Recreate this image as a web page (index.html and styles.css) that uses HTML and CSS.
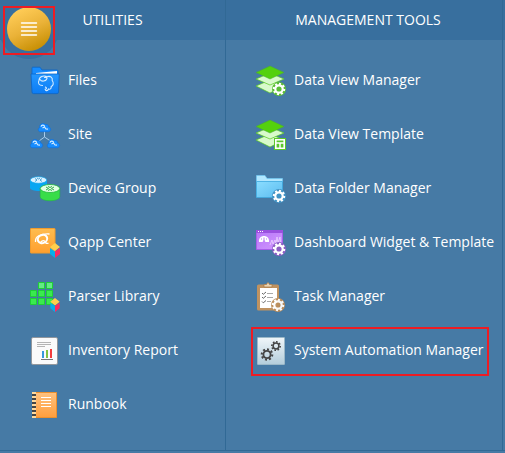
FILE: index.html
```html
<!DOCTYPE html>
<html lang="en">
<head>
<meta charset="utf-8">
<title>Menu</title>
<link rel="stylesheet" href="styles.css">
</head>
<body>
<svg class="defs" aria-hidden="true">
  <defs>
    <linearGradient id="blue" x2="0" y2="1"><stop stop-color="#2497ff"/><stop offset="1" stop-color="#0c7cf5"/></linearGradient>
    <linearGradient id="sky" x2="1" y2="1"><stop stop-color="#8bddff"/><stop offset="1" stop-color="#5bbcf0"/></linearGradient>
    <linearGradient id="amber" x2="0" y2="1"><stop stop-color="#ffbd4f"/><stop offset="1" stop-color="#ff9f2e"/></linearGradient>
    <linearGradient id="peach" x2="0" y2="1"><stop stop-color="#ffc27f"/><stop offset="1" stop-color="#ff9e3d"/></linearGradient>
    <linearGradient id="violet" x2="1" y2="1"><stop stop-color="#b673f8"/><stop offset="1" stop-color="#d29aff"/></linearGradient>
    <linearGradient id="steel" x2="0" y2="1"><stop stop-color="#f0f6f9"/><stop offset="1" stop-color="#b3cddb"/></linearGradient>
    <symbol id="gear" viewBox="-7 -7 14 14" overflow="visible">
      <circle class="gear-edge" r="5"/>
      <circle class="gear-teeth" r="5" pathLength="32"/>
      <circle class="gear-ring" r="3.7"/>
    </symbol>
    <symbol id="cube" viewBox="0 0 10 15">
      <path fill="#ffcf4d" d="M5 0l5 4-5 4-5-4z"/>
      <path fill="#08aeea" d="M0 5l5 3.500V15l-5-4z"/>
      <path fill="#fb2a62" d="M10 5L5 8.500V15l5-4z"/>
    </symbol>
    <symbol id="cloud" viewBox="0 0 13 9" overflow="visible">
      <path fill="#168cff" stroke="#0a6fe0" stroke-width=".6" d="M2 8.700C0 8.400-.2 5.200 1.800 4.500 1 1 5.500-.8 7.500 1.600c2.200-.6 3.200.9 3 2.400 2.800.3 2.800 4.400 0 4.700z"/>
      <path fill="none" stroke="#d4ebff" stroke-width="1.200" d="M3 3.600c.5-2 3-2 3.700-.2M4.500 5l2-1 1.500 2 2 .2"/>
    </symbol>
    <symbol id="layers" viewBox="0 0 30 30">
      <path fill="#d8facb" stroke="#58c81c" stroke-width=".7" d="M0 21l14-6 14 6-14 7z"/>
      <path fill="#d8facb" stroke="#58c81c" stroke-width=".7" d="M0 14l14-6 14 6-14 6z"/>
      <path fill="#54d10d" stroke="#4aaa32" stroke-width=".5" d="M0 7.500L14 1l14 6.500L14 14z"/>
    </symbol>
  </defs>
</svg>
<nav class="menu">
  <button class="menu-button" type="button" aria-label="Menu">
    <svg viewBox="0 0 18 16" width="18" height="16"><path stroke="#fff" stroke-width="1.400" stroke-linecap="round" d="M1.500 2h15M1.500 6h15M1.500 10h15M1.500 14h15"/></svg>
  </button>
  <section class="column utilities">
    <h2>UTILITIES</h2>
    <ul>
      <li><a href="#"><svg class="icon" viewBox="0 0 30 30">
        <path fill="#168cff" stroke="#0a64c8" stroke-width=".8" d="M2 11V3q0-.8.8-.8H10l2 2.800h15q1 0 1 1v6z"/>
        <path fill="#fff" d="M6 8l21-2v4H6z"/>
        <path fill="url(#blue)" stroke="#0a64c8" stroke-width=".8" d="M1 9h28.200l-.7 18q0 1.600-1.500 1.600H3.500Q2 28.600 2 27z"/>
        <path fill="none" stroke="#d9edff" stroke-width="1.100" stroke-linecap="round" d="M12.500 20.500C9 20.500 7.500 18 9 15.500c0-4 4.500-5.500 8-3.800 3.500-1.200 6 1 5.200 3.800 2 2.500 1 5-1 6 .2 2.500-1.200 3-2.700 2.500-.8 2-3 2.200-3.300.3 1.800-.3 1.500-1.500.2-2.300M10 14.500c1.500 2.500 6 2 7-1 .2-1-1.500-1.300-2.500-1"/>
      </svg>Files</a></li>
      <li><a href="#"><svg class="icon" viewBox="0 0 30 30">
        <path fill="none" stroke="#a9cdec" stroke-width="1" d="M14.500 12v6L9 22M14.500 18l6 4"/>
        <use href="#cloud" x="8" y="4" width="13" height="9"/><use href="#cloud" x="0" y="20" width="13" height="9"/><use href="#cloud" x="17" y="20" width="13" height="9"/>
      </svg>Site</a></li>
      <li><a href="#"><svg class="icon" viewBox="0 0 30 30">
        <path fill="#08a6f2" d="M0 7v8c1 4 16 4 17 0V7z"/>
        <ellipse cx="8.500" cy="7" rx="8.200" ry="3.300" fill="#daf1ff" stroke="#1aa9ed" stroke-width=".7"/>
        <path fill="none" stroke="#248fc9" stroke-width=".8" d="M5 5.500L7 7 5 8.500M12 5.500L10 7l2 1.500M7 5l1.500 1L10 5"/>
        <path fill="#38dd48" stroke="#21b838" stroke-width=".5" d="M10.200 15v9c1 5 18.600 5 19.600 0v-9z"/>
        <ellipse cx="20" cy="15.500" rx="9.700" ry="4" fill="#e1ffe3" stroke="#20b83a" stroke-width=".8"/>
        <path fill="none" stroke="#23a23b" stroke-width=".9" d="M16 14l2.500 1.500L16 17M24 14l-2.500 1.500L24 17M18 13.500l2 1 2-1M18 17.500l2-1 2 1"/>
      </svg>Device Group</a></li>
      <li><a href="#"><svg class="icon" viewBox="0 0 30 30">
        <rect x=".5" y="1.500" width="24.500" height="24.500" rx=".5" fill="url(#amber)" stroke="#ef9b2e"/>
        <ellipse cx="12.500" cy="12" rx="4.800" ry="4" fill="none" stroke="#fff" stroke-width="2" transform="rotate(-25 12.500 12)"/>
        <path fill="none" stroke="#fff" stroke-width="1.300" d="M5.500 15C5 9.500 10 6.500 19.500 7M10.500 15.500c2-2.500 4-2.500 5 0q1.200 1.500 3 .5"/>
        <use href="#cube" x="20" y="16" width="10" height="15"/>
      </svg>Qapp Center</a></li>
      <li><a href="#"><svg class="icon" viewBox="0 0 30 30">
        <g fill="#3aea4e" stroke="#1fcf36"><path fill="#62eb84" d="M8.500 1.500h6v6h-6zM16.500 1.500h6v6h-6z"/><path d="M.5 9.500h6v6h-6zM8.500 9.500h6v6h-6zM16.500 9.500h6v6h-6zM.5 17.500h6v6h-6zM8.500 17.500h6v6h-6zM16.500 17.500h6v6h-6z"/></g>
        <use href="#cube" x="20" y="17" width="10" height="14"/>
      </svg>Parser Library</a></li>
      <li><a href="#"><svg class="icon" viewBox="0 0 30 30">
        <rect x="1.500" y="2.500" width="26" height="27" rx="1.500" fill="#fafafa" stroke="#92979d"/>
        <path stroke="#b4b4b4" d="M7 7.500h14M7 9.500h14M7 11.500h8"/>
        <path fill="#3598db" d="M12 16h2v7h-2z"/><path fill="#80c342" d="M16 15h2v8h-2z"/><path fill="#f43c3c" d="M20 14h2v9h-2z"/><path stroke="#777" d="M11 24.500h12"/>
      </svg>Inventory Report</a></li>
      <li><a href="#"><svg class="icon" viewBox="0 0 30 30">
        <path fill="url(#peach)" stroke="#ed902d" d="M4.500 3.500h22v25h-22z"/>
        <path stroke="#ffd99c" stroke-width="4" d="M4 3v26"/>
        <path stroke="#454545" stroke-width="4" stroke-dasharray="2" d="M4 5v24"/>
        <path stroke="#fff" d="M11 8.500h10M11 11.500h10M11 14.500h10M11 17.500h10"/>
      </svg>Runbook</a></li>
    </ul>
  </section>
  <section class="column tools">
    <h2>MANAGEMENT TOOLS</h2>
    <ul>
      <li><a href="#"><svg class="icon" viewBox="0 0 30 30"><use href="#layers" width="30" height="30"/><use class="gear-green" href="#gear" x="16" y="17" width="14" height="14"/></svg>Data View Manager</a></li>
      <li><a href="#"><svg class="icon" viewBox="0 0 30 30"><use href="#layers" width="30" height="30"/><path fill="#5bc82b" d="M18 19h12v12H18z"/><path fill="none" stroke="#fff" stroke-width="1.600" d="M19.800 20.800h8.400v8.400h-8.400z"/><path stroke="#fff" stroke-width="1.400" d="M20 24h8M24 24v5"/></svg>Data View Template</a></li>
      <li><a href="#"><svg class="icon" viewBox="0 0 30 30">
        <path fill="#b1e7ff" stroke="#71caf3" stroke-width=".7" d="M.5 24V2.500H9l2 3h15.500V9H.5z"/>
        <path fill="url(#sky)" stroke="#3fa9e0" stroke-width=".8" d="M.5 8.500h26v16H.5z"/>
        <use class="gear-blue" href="#gear" x="16" y="16" width="14" height="14"/>
      </svg>Data Folder Manager</a></li>
      <li><a href="#"><svg class="icon" viewBox="0 0 30 30">
        <path fill="url(#violet)" stroke="#a75ee9" d="M.5 3.500h26v19H.5z"/><path fill="#9a50df" d="M0 3h27v3H0z"/>
        <path fill="#fff" d="M2 4h1v1H2zM4 4h1v1H4zM6 4h1v1H6zM3 15c-1-8 11-8 10 0H9.500L8 13l-1.500 2z"/>
        <path fill="none" stroke="#a75ee9" stroke-width=".8" d="M8 14V10.500M5 12h1M10 12h1"/>
        <path fill="none" stroke="#f1dcff" stroke-width=".7" d="M14 18l2-5 1 4 2-4 1 4 1-7 1 6 2-6 .5 5"/>
        <use class="gear-violet" href="#gear" x="16" y="15" width="14" height="14"/>
      </svg>Dashboard Widget &amp; Template</a></li>
      <li><a href="#"><svg class="icon" viewBox="0 0 30 30">
        <rect x="1" y="3.500" width="22" height="26" rx="1.500" fill="#bf9260"/>
        <path fill="#fff" d="M4 7h17v20H4z"/><path fill="#ead5b5" stroke="#aa7844" stroke-width=".7" d="M8 6V3.500h2.500q1.500-4 3 0H16V6z"/>
        <path fill="none" stroke="#444" stroke-width=".8" d="M6 12l1.300 1.300L10 11M6 16l1.300 1.300L10 15M6 20.500l1.300 1.300 2.700-2.300"/>
        <path stroke="#aaa" d="M11 12.500h6M11 16.500h6M11 20.500h4"/>
        <use class="gear-tan" href="#gear" x="15" y="17" width="14" height="14"/>
      </svg>Task Manager</a></li>
      <li class="highlighted"><a href="#"><svg class="icon" viewBox="0 0 30 30">
        <rect x="1.500" y="2.500" width="27" height="27" rx=".5" fill="url(#steel)" stroke="#9bb8c8"/>
        <g fill="none" stroke="#454545"><circle cx="11" cy="19.500" r="3.600" stroke-width="1.900"/><circle cx="11" cy="19.500" r="5.300" stroke-width="2" stroke-dasharray="2 2" pathLength="32"/>
        <circle cx="20" cy="11" r="2.900" stroke-width="1.500"/><circle cx="20" cy="11" r="4.200" stroke-width="1.600" stroke-dasharray="2 2" pathLength="32"/></g>
      </svg>System Automation Manager</a></li>
    </ul>
  </section>
</nav>
</body>
</html>
```
FILE: styles.css
```css
* { box-sizing: border-box; }

body {
  margin: 0;
  background: #467aa5;
  color: #fff;
  font: 14px/20px "Open Sans", "Noto Sans", sans-serif;
}

.defs { position: absolute; width: 0; height: 0; }

.menu {
  position: relative;
  display: grid;
  grid-template-columns: 226px 1fr;
  padding-right: 2px;
  background: linear-gradient(#386f9e 40px, transparent 40px);
  border-bottom: 1px solid #316995;
}

.column { border-right: 1px solid #316995; padding-bottom: 19px; }

h2 {
  margin: 0;
  height: 40px;
  font-size: 14px;
  font-weight: 400;
  line-height: 40px;
  text-align: center;
  background: #386f9e;
}

.tools h2 { padding-left: 8px; }

ul {
  margin: 0;
  padding: 13px 0 0 30px;
  list-style: none;
}

li { position: relative; }

a {
  display: flex;
  align-items: center;
  gap: 8px;
  height: 54px;
  color: inherit;
  text-decoration: none;
  white-space: nowrap;
}

.icon { width: 30px; height: 30px; flex: none; overflow: visible; }

.menu-button {
  position: absolute;
  top: 7px;
  left: 7px;
  display: grid;
  place-items: center;
  width: 44px;
  height: 44px;
  padding: 0;
  border: 0;
  border-radius: 50%;
  background: linear-gradient(155deg, #ffcc57 12%, #eab238 50%, #c58d00 90%);
  box-shadow: 0 0 0 8px #386f9e;
}

.menu-button::after {
  content: "";
  position: absolute;
  inset: -1px -4px -4px -4px;
  border: 2px solid #ed1c24;
}

.highlighted::after {
  content: "";
  position: absolute;
  inset: 4px 13px 1px -5px;
  border: 2px solid #ed1c24;
  pointer-events: none;
}

.gear-edge { fill: none; stroke: var(--edge); stroke-width: 4; }
.gear-teeth { fill: none; stroke: #fff; stroke-width: 2.5; stroke-dasharray: 2 2; }
.gear-ring { fill: var(--edge); stroke: #fff; stroke-width: 2.2; }
.gear-green { --edge: #5bbf34; }
.gear-blue { --edge: #4294c5; }
.gear-violet { --edge: #8b5ec4; }
.gear-tan { --edge: #bc8e5b; }
.gear-tan { opacity: .95; }
```
